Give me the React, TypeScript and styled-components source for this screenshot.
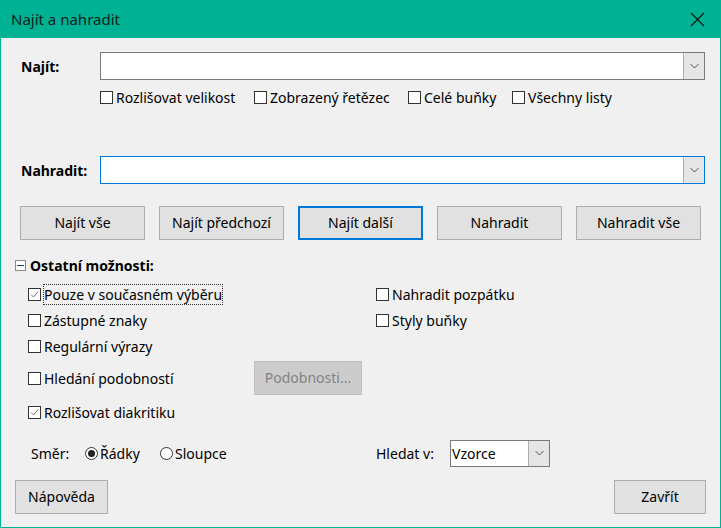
import React from 'react'
import { createGlobalStyle, styled } from 'styled-components'

const GlobalStyle = createGlobalStyle`
  html, body {
    margin: 0;
    padding: 0;
    background: #f0f0f0;
  }
  body {
    font-family: 'Noto Sans', 'Open Sans', sans-serif;
    font-size: 14px;
    color: #000;
  }
`

const Window = styled.div`
  box-sizing: border-box;
  width: 721px;
  height: 528px;
  display: flex;
  flex-direction: column;
  background: #f0f0f0;
  border: 1px solid #00b294;
  border-top: none;
`
const TitleBar = styled.div`
  height: 38px;
  margin: 0 -1px;
  background: #00b294;
  display: flex;
  align-items: center;
  justify-content: space-between;
  padding: 0 16px 0 11px;
  font-size: 15px;
  color: #0d1f1b;
`
const CloseIcon = styled.svg`
  width: 15px;
  height: 15px;
`
const Body = styled.div`
  flex: 1;
  display: flex;
  flex-direction: column;
`
const FieldRow = styled.div<{ $top: number }>`
  display: flex;
  align-items: center;
  height: 28px;
  margin-top: ${p => p.$top}px;
  padding: 0 15px 0 20px;
`
const FieldLabel = styled.label`
  width: 79px;
  font-weight: 700;
  font-size: 14px;
`
const Combo = styled.div<{ $focused?: boolean }>`
  box-sizing: border-box;
  flex: 1;
  height: 28px;
  display: flex;
  background: #fff;
  border: 1px solid ${p => (p.$focused ? '#0078d7' : '#7a7a7a')};
`
const ComboText = styled.div`
  flex: 1;
  display: flex;
  align-items: center;
  padding-left: 1px;
`
const ComboButton = styled.div`
  box-sizing: border-box;
  width: 21px;
  height: 100%;
  background: #e5e5e5;
  border-left: 1px solid #adadad;
  display: flex;
  align-items: center;
  justify-content: center;
`
const Chevron = () => (
  <svg width="9" height="6" viewBox="0 0 9 6">
    <path d="M0.5 1 L4.5 5 L8.5 1" fill="none" stroke="#555" strokeWidth="1" />
  </svg>
)

const CheckRow = styled.div`
  display: flex;
  align-items: center;
  height: 18px;
  margin-top: 8px;
  padding-left: 99px;
  gap: 14px;
`
const CheckItem = styled.label<{ $width?: number }>`
  display: flex;
  align-items: center;
  gap: 3px;
  white-space: nowrap;
  ${p => (p.$width ? `width: ${p.$width}px;` : '')}
  flex-shrink: 0;
`
const Box = styled.span`
  box-sizing: border-box;
  width: 13px;
  height: 13px;
  border: 1px solid #333;
  background: #fff;
  display: inline-flex;
  align-items: center;
  justify-content: center;
  flex-shrink: 0;
`
const FocusText = styled.span`
  outline: 1px dotted #333;
  outline-offset: 0;
`

const ButtonRow = styled.div`
  display: flex;
  gap: 14px;
  margin-top: 22px;
  padding-left: 19px;
`
const Button = styled.button<{ $default?: boolean; $width?: number }>`
  box-sizing: border-box;
  width: ${p => p.$width ?? 125}px;
  height: 34px;
  background: #e1e1e1;
  border: ${p => (p.$default ? '2px solid #0078d7' : '1px solid #adadad')};
  font-family: inherit;
  font-size: 14px;
  color: #000;
  padding: 0 0 1px;
  &:disabled {
    background: #cccccc;
    border-color: #bfbfbf;
    color: #838383;
  }
`

const Expander = styled.div`
  display: flex;
  align-items: center;
  gap: 4px;
  height: 18px;
  margin-top: 16px;
  padding-left: 14px;
  font-weight: 700;
`
const MinusBox = styled.span`
  box-sizing: border-box;
  width: 11px;
  height: 11px;
  border: 1px solid #8a8a8a;
  background: #fff;
  display: inline-flex;
  align-items: center;
  justify-content: center;
  &::after {
    content: '';
    width: 7px;
    height: 1px;
    background: #1e3a6e;
  }
`

const Options = styled.div`
  display: grid;
  grid-template-columns: 348px 1fr;
  grid-template-rows: 26px 26px 26px 38px 30px;
  margin-top: 7px;
  padding-left: 27px;
  align-items: center;
`
const OptionCell = styled.div`
  display: flex;
  align-items: center;
`

const DirectionRow = styled.div`
  display: flex;
  align-items: center;
  height: 28px;
  margin-top: 12px;
  padding-left: 30px;
`
const DirLabel = styled.span`
  width: 54px;
`
const RadioItem = styled.label<{ $width: number }>`
  display: flex;
  align-items: center;
  gap: 2px;
  width: ${p => p.$width}px;
`
const Radio = styled.span<{ $on?: boolean }>`
  box-sizing: border-box;
  width: 13px;
  height: 13px;
  border-radius: 50%;
  border: 1px solid #333;
  background: #fff;
  display: inline-flex;
  align-items: center;
  justify-content: center;
  &::after {
    content: '';
    display: ${p => (p.$on ? 'block' : 'none')};
    width: 7px;
    height: 7px;
    border-radius: 50%;
    background: #222;
  }
`
const SearchIn = styled.div`
  display: flex;
  align-items: center;
  margin-left: 121px;
`
const SearchLabel = styled.span`
  width: 74px;
`
const SmallCombo = styled(Combo)`
  flex: none;
  width: 100px;
  height: 27px;
`

const Footer = styled.div`
  display: flex;
  justify-content: space-between;
  margin-top: 13px;
  padding: 0 14px 0 14px;
`

const CheckMark = () => (
  <svg width="11" height="11" viewBox="0 0 11 11">
    <path d="M2 5.5 L4.5 8 L9 2.5" fill="none" stroke="#777" strokeWidth="1" />
  </svg>
)

function Check({ label, checked, width, focused }: { label: string; checked?: boolean; width?: number; focused?: boolean }) {
  return (
    <CheckItem $width={width}>
      <Box>{checked && <CheckMark />}</Box>
      {focused ? <FocusText>{label}</FocusText> : <span>{label}</span>}
    </CheckItem>
  )
}

export default function App() {
  return (
    <>
      <GlobalStyle />
      <Window>
        <TitleBar>
          <span>Najít a nahradit</span>
          <CloseIcon viewBox="0 0 15 15">
            <path d="M1 1 L14 14 M14 1 L1 14" stroke="#111" strokeWidth="1.1" />
          </CloseIcon>
        </TitleBar>
        <Body>
          <FieldRow $top={14}>
            <FieldLabel>Najít:</FieldLabel>
            <Combo>
              <ComboText />
              <ComboButton><Chevron /></ComboButton>
            </Combo>
          </FieldRow>
          <CheckRow>
            <Check label="Rozlišovat velikost" width={140} />
            <Check label="Zobrazený řetězec" width={140} />
            <Check label="Celé buňky" width={90} />
            <Check label="Všechny listy" />
          </CheckRow>

          <FieldRow $top={50}>
            <FieldLabel>Nahradit:</FieldLabel>
            <Combo $focused>
              <ComboText />
              <ComboButton><Chevron /></ComboButton>
            </Combo>
          </FieldRow>

          <ButtonRow>
            <Button>Najít vše</Button>
            <Button>Najít předchozí</Button>
            <Button $default>Najít další</Button>
            <Button>Nahradit</Button>
            <Button>Nahradit vše</Button>
          </ButtonRow>

          <Expander>
            <MinusBox />
            <span>Ostatní možnosti:</span>
          </Expander>

          <Options>
            <OptionCell><Check label="Pouze v současném výběru" checked focused /></OptionCell>
            <OptionCell><Check label="Nahradit pozpátku" /></OptionCell>
            <OptionCell><Check label="Zástupné znaky" /></OptionCell>
            <OptionCell><Check label="Styly buňky" /></OptionCell>
            <OptionCell><Check label="Regulární výrazy" /></OptionCell>
            <OptionCell />
            <OptionCell>
              <Check label="Hledání podobností" width={226} />
              <Button $width={108} disabled>Podobnosti...</Button>
            </OptionCell>
            <OptionCell />
            <OptionCell><Check label="Rozlišovat diakritiku" checked /></OptionCell>
            <OptionCell />
          </Options>

          <DirectionRow>
            <DirLabel>Směr:</DirLabel>
            <RadioItem $width={75}><Radio $on />Řádky</RadioItem>
            <RadioItem $width={95}><Radio />Sloupce</RadioItem>
            <SearchIn>
              <SearchLabel>Hledat v:</SearchLabel>
              <SmallCombo>
                <ComboText>Vzorce</ComboText>
                <ComboButton><Chevron /></ComboButton>
              </SmallCombo>
            </SearchIn>
          </DirectionRow>

          <Footer>
            <Button $width={93}>Nápověda</Button>
            <Button $width={92}>Zavřít</Button>
          </Footer>
        </Body>
      </Window>
    </>
  )
}
